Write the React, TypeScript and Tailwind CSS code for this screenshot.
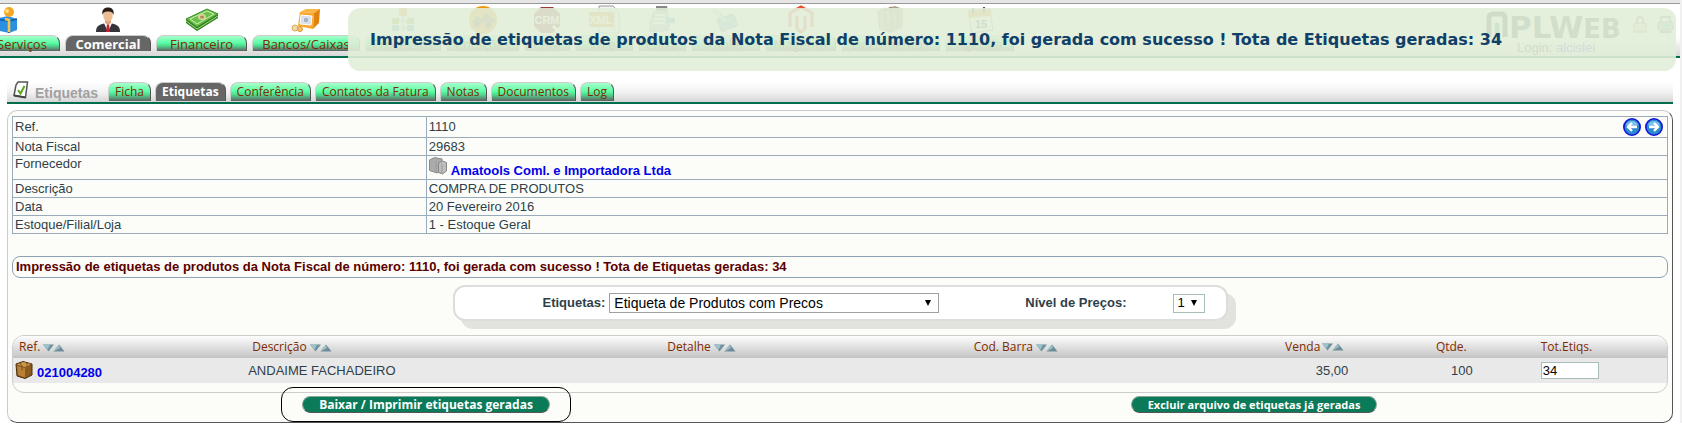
import type { ReactNode } from 'react';

type Tab = { label: string; width: string; icon: ReactNode; active?: boolean };

const tabBase =
  'flex items-center justify-center whitespace-nowrap rounded-t-lg border-t border-l border-r border-[#cccccc] border-r-[#555555] leading-4';
const tabGreen =
  'bg-[linear-gradient(#a8ffcb_0%,#5cffa6_45%,#4fd98f_65%,#606060_100%)] text-[#802a00]';
const tabGrey = 'bg-[#666666] font-bold text-white';

const GiftIcon = () => (
  <svg width="34" height="26" viewBox="0 0 34 26" className="mr-5" aria-hidden="true">
    <path d="M0 12l13-3 9 3v11l-8 3-14-3z" fill="#2d8fe0" />
    <path d="M14 14v12M22 12l-8 2-14-2" stroke="#105ba6" strokeWidth="1.5" fill="none" />
    <path d="M10 12l4 1v12" stroke="#f5c64b" strokeWidth="2.5" fill="none" />
    <circle cx="14" cy="5" r="5" fill="#f5a623" />
    <circle cx="12" cy="4" r="2" fill="#ffe08a" />
  </svg>
);

const PersonIcon = () => (
  <svg width="26" height="26" viewBox="0 0 26 26" aria-hidden="true">
    <path d="M1 25c0-6 3-7 8-8.500h8c5 1.500 8 2.500 8 8.500z" fill="#33353b" />
    <path d="M9 16l4 9 4-9z" fill="#fff" />
    <path d="M12 17h2l1 8h-4z" fill="#c8202c" />
    <path d="M10 12h6v4l-3 2-3-2z" fill="#dba479" />
    <ellipse cx="13" cy="8.500" rx="4.800" ry="6" fill="#edbd94" />
    <path d="M7.500 8C6.500 3 9 .5 13 .5S19.500 3 18.500 8C17.500 5 16 4.500 13 4.500S8.500 5 7.500 8z" fill="#2a1c17" />
  </svg>
);

const MoneyIcon = () => (
  <svg width="34" height="24" viewBox="0 0 34 24" aria-hidden="true">
    <path d="M1 11v4l11 8 21-13V5z" fill="#2e7d1f" />
    <path d="M1 11L22 1l11 5-21 13z" fill="#6cc04a" stroke="#3f8f2a" />
    <path d="M1 13l11 8L33 8" stroke="#a5e082" fill="none" />
    <path d="M5 11L22 3l7 3-17 10z" fill="none" stroke="#c9efb2" />
    <ellipse cx="17" cy="9" rx="4" ry="3" fill="#d9d59a" />
    <ellipse cx="17" cy="9" rx="2" ry="1.500" fill="#a88a5a" />
  </svg>
);

const SafeIcon = () => (
  <svg width="30" height="24" viewBox="0 0 30 24" aria-hidden="true">
    <path d="M9 4L15 1h14l-6 4z" fill="#fbb540" />
    <path d="M23 5l6-4-1 14-6 6z" fill="#e0820e" />
    <path d="M9 4l14 1-1 16L7 18z" fill="#f9a72b" />
    <path d="M10 7l11 1-1 9-11-1z" fill="#d5dfea" stroke="#fff" />
    <circle cx="15" cy="12" r="3" fill="#a8b7c6" stroke="#e9eef3" />
    <circle cx="4" cy="20" r="3" fill="#f2d9a8" stroke="#d9a75a" />
    <circle cx="9" cy="21" r="2.500" fill="#f6c36c" stroke="#d9953a" />
  </svg>
);

const TreeIcon = () => (
  <svg width="24" height="26" viewBox="0 0 24 26" aria-hidden="true">
    <path d="M12 6v18M4 14h16M4 21h16" stroke="#99a5b0" strokeWidth="1" />
    <rect x="8" y="1" width="8" height="8" rx="2" fill="#f09a1a" />
    <rect x="1" y="11" width="7" height="6" rx="1" fill="#8bbf2e" />
    <rect x="16" y="11" width="7" height="6" rx="1" fill="#8bbf2e" />
    <rect x="1" y="18" width="7" height="6" rx="1" fill="#50a8dd" />
    <rect x="16" y="18" width="7" height="6" rx="1" fill="#50a8dd" />
  </svg>
);

const TruckIcon = () => (
  <svg width="30" height="30" viewBox="0 0 30 30" aria-hidden="true">
    <circle cx="15" cy="15" r="14" fill="#f0930f" />
    <path d="M4 17l4-6 6 2 4-5 6 5 3 1v4l-5 1-4-2-6 3z" fill="#8a6a48" />
    <circle cx="9" cy="19" r="3" fill="#6b5743" />
    <circle cx="20" cy="20" r="3" fill="#6b5743" />
  </svg>
);

const CrmIcon = () => (
  <svg width="28" height="28" viewBox="0 0 28 28" aria-hidden="true">
    <path d="M8 1h12l7 7v12l-7 7H8l-7-7V8z" fill="#9c3a3a" />
    <text x="14" y="18" textAnchor="middle" fontSize="11" fontWeight="700" fill="#fff" className="font-['Liberation_Sans',sans-serif]">CRM</text>
    <path d="M20 20l6 6" stroke="#fff" strokeWidth="3" />
  </svg>
);

const XmlIcon = () => (
  <svg width="32" height="30" viewBox="0 0 32 30" aria-hidden="true">
    <path d="M11 1h14l6 6v21H11z" fill="#f3f3f3" stroke="#999" />
    <rect x="1" y="7" width="25" height="15" fill="#ef8a18" />
    <text x="13" y="19" textAnchor="middle" fontSize="11" fontWeight="700" fill="#fff" className="font-['Liberation_Sans',sans-serif]">XML</text>
  </svg>
);

const RegisterIcon = () => (
  <svg width="28" height="30" viewBox="0 0 28 30" aria-hidden="true">
    <path d="M8 1h11l1 5H8z" fill="#888" />
    <path d="M6 7h13l3 10-2 8-18 2V18z" fill="#c2ced8" stroke="#8f9ca8" />
    <path d="M7 10h10M6 14h11M5 18h12" stroke="#fff" strokeWidth="2" />
    <path d="M18 13h9v5h-9z" fill="#5a9fd0" />
  </svg>
);

const PadIcon = () => (
  <svg width="30" height="26" viewBox="0 0 30 26" aria-hidden="true">
    <path d="M6 13l16-6 5 11-16 7z" fill="#88bce8" stroke="#5b93c6" />
    <path d="M2 4l11 11 4 1-2-4L4 2z" fill="#e6f0fa" stroke="#6f9fc8" />
  </svg>
);

const MagentoIcon = () => (
  <svg width="28" height="30" viewBox="0 0 28 30" aria-hidden="true">
    <path d="M3 22V8l11-6 11 6v14M10 24V11M18 24V11M10 24l4 3 4-3" fill="none" stroke="#e5532a" strokeWidth="3" />
  </svg>
);

const FoldersIcon = () => (
  <svg width="30" height="30" viewBox="0 0 30 30" aria-hidden="true">
    <path d="M7 4l12-3 8 3v18l-12 6-12-5z" fill="#b0a48f" />
    <path d="M2 7l7-4v18l5 6-10-3zM9 6l6-4v20l2 5M15 7l6-4v20M21 8l6-4" fill="#c2b7a3" stroke="#8e8069" />
  </svg>
);

const CalendarIcon = () => (
  <svg width="28" height="28" viewBox="0 0 28 28" aria-hidden="true">
    <path d="M2 5l22-2 3 21-21 3z" fill="#fafafa" stroke="#888" />
    <path d="M2 5l22-2 1 7-22 2z" fill="#eea51e" />
    <path d="M7 2v6M18 1v6" stroke="#555" strokeWidth="2" />
    <text x="15" y="22" textAnchor="middle" fontSize="11" fontWeight="700" fill="#444" className="font-['Liberation_Sans',sans-serif]">15</text>
  </svg>
);

const mainTabs: Tab[] = [
  { label: 'Serviços', width: 'w-[76px]', icon: <GiftIcon /> },
  { label: 'Comercial', width: 'w-[86px]', icon: <PersonIcon />, active: true },
  { label: 'Financeiro', width: 'w-[91px]', icon: <MoneyIcon /> },
  { label: 'Bancos/Caixas', width: 'w-[108px]', icon: <SafeIcon /> },
  { label: 'Processos', width: 'w-[76px]', icon: <TreeIcon /> },
  { label: 'Cotações', width: 'w-[73px]', icon: <TruckIcon /> },
  { label: 'CRM', width: 'w-[46px]', icon: <CrmIcon /> },
  { label: 'NFe', width: 'w-[58px]', icon: <XmlIcon /> },
  { label: 'Caixa', width: 'w-[48px]', icon: <RegisterIcon /> },
  { label: 'Tablet', width: 'w-[69px]', icon: <PadIcon /> },
  { label: 'Magento', width: 'w-[71px]', icon: <MagentoIcon /> },
  { label: 'Documentos', width: 'w-[99px]', icon: <FoldersIcon /> },
  { label: 'Agenda', width: 'w-[69px]', icon: <CalendarIcon /> },
];

const subTabs = [
  { label: 'Ficha' },
  { label: 'Etiquetas', active: true },
  { label: 'Conferência' },
  { label: 'Contatos da Fatura' },
  { label: 'Notas' },
  { label: 'Documentos' },
  { label: 'Log' },
];

const ArrowIcon = ({ left }: { left?: boolean }) => (
  <svg width="18" height="18" viewBox="0 0 18 18" aria-hidden="true">
    <circle cx="9" cy="9" r="8.200" fill="#2b8ad0" stroke="#1212d8" strokeWidth="1.600" />
    <path d="M3 7a6.500 6.500 0 0112 0c-3 2-9 2-12 0z" fill="#7fc0ec" />
    <path
      d={left ? 'M14 9H5M9 5L5 9l4 4' : 'M4 9h9M9 5l4 4-4 4'}
      fill="none"
      stroke="#fff"
      strokeWidth="2.400"
    />
  </svg>
);

const SortIcons = () => (
  <svg width="22" height="8" viewBox="0 0 22 8" className="inline-block shrink-0" aria-hidden="true">
    <path d="M0 .5h11L5.500 7.500z" fill="#6f919c" />
    <path d="M0 .5h7L4.500 5.500z" fill="#9fc3cd" />
    <path d="M10.500 7.500h11l-5.500-7z" fill="#6d8c97" />
    <path d="M10.500 7.500L16 .5l1 3.500z" fill="#9bbfca" />
  </svg>
);

const BoxIcon = () => (
  <svg width="18" height="18" viewBox="0 0 18 18" aria-hidden="true">
    <path d="M1 3l7-2.500 9 2.500v11l-7 3.500L2 15z" fill="#8a5a1f" stroke="#4a2e0c" />
    <path d="M2 5l8 2v9.500L3 14z" fill="#b87f35" />
    <path d="M1.500 3.500L8 1l8 2-6 3z" fill="#c9964c" />
    <path d="M5 2l2 3v4M12 1.500V5" stroke="#5f3c12" fill="none" strokeDasharray="2 1" />
  </svg>
);

const SupplierIcon = () => (
  <svg width="18" height="18" viewBox="0 0 18 18" aria-hidden="true">
    <path d="M.5 3l5-2.500L13 2v12l-5 2-7.500-2.500z" fill="#ababab" stroke="#8a8a8a" />
    <path d="M7 4.500V15" stroke="#999" fill="none" />
    <path d="M9.500 6l4-2 4 1.500V14l-4 3-4-1.500z" fill="#bdbdbd" stroke="#888" />
    <path d="M13 7.500v9" stroke="#999" fill="none" />
  </svg>
);

const CheckPageIcon = () => (
  <svg width="16" height="18" viewBox="0 0 16 18" aria-hidden="true">
    <path d="M5 1h9.500L12.500 16.500 1 14.500 3 4z" fill="#fff" stroke="#555" strokeWidth="1.500" />
    <path d="M1 14.500l11.500 2" stroke="#444" strokeWidth="2" />
    <path d="M5 9l2.500 3.500L11.500 5" fill="none" stroke="#5ca51c" strokeWidth="2" />
  </svg>
);

const Logo = () => (
  <svg width="142" height="36" viewBox="0 0 142 36" role="img" aria-label="MPLWeb">
    <path d="M4 27V8q0-4 4-4h8q4 0 4 4v19" fill="none" stroke="#334433" strokeWidth="5" />
    <path d="M12 15v17" stroke="#1d9a66" strokeWidth="5" strokeLinecap="round" />
    <g className="font-['DejaVu_Sans',sans-serif]" fontWeight="700" fill="#445544">
      <text x="24" y="28" fontSize="31">
        PLW<tspan fontSize="26">EB</tspan>
      </text>
    </g>
  </svg>
);

const LockIcon = () => (
  <svg width="14" height="17" viewBox="0 0 14 17" aria-hidden="true">
    <path d="M4 7V4q0-3 3-3t3 3v3" fill="none" stroke="#666" strokeWidth="1.500" />
    <rect x="1" y="7" width="12" height="9" rx="1" fill="#f2e2b0" stroke="#777" />
  </svg>
);

const PrinterIcon = () => (
  <svg width="17" height="17" viewBox="0 0 17 17" aria-hidden="true">
    <path d="M4 7V1h9v6" fill="#fff" stroke="#666" strokeWidth="1.500" />
    <rect x="1" y="6" width="15" height="8" rx="2" fill="#bbb" stroke="#666" />
    <rect x="4" y="8" width="9" height="5" fill="#79bfe0" />
    <path d="M3 16h11" stroke="#666" strokeWidth="2" />
  </svg>
);

const Caret = () => (
  <svg width="6" height="6" viewBox="0 0 6 6" className="pointer-events-none absolute top-1/2 right-2 -translate-y-1/2" aria-hidden="true">
    <path d="M0 0h6L3 6z" fill="#000" />
  </svg>
);

const message =
  'Impressão de etiquetas de produtos da Nota Fiscal de número: 1110, foi gerada com sucesso ! Tota de Etiquetas geradas: 34';

const details: { label: string; value: ReactNode; height: string }[] = [
  {
    label: 'Ref.',
    height: 'h-[21px]',
    value: (
      <div className="flex items-center justify-between">
        <span>1110</span>
        <span className="flex gap-1 pr-0.5">
          <a href="#anterior" aria-label="Anterior"><ArrowIcon left /></a>
          <a href="#proximo" aria-label="Próximo"><ArrowIcon /></a>
        </span>
      </div>
    ),
  },
  { label: 'Nota Fiscal', height: 'h-[18px]', value: '29683' },
  {
    label: 'Fornecedor',
    height: 'h-6',
    value: (
      <a href="#fornecedor" className="flex items-start gap-1 font-bold text-[#0000ee]">
        <SupplierIcon />
        <span className="pt-1.5">Amatools Coml. e Importadora Ltda</span>
      </a>
    ),
  },
  { label: 'Descrição', height: 'h-[18px]', value: 'COMPRA DE PRODUTOS' },
  { label: 'Data', height: 'h-[18px]', value: '20 Fevereiro 2016' },
  { label: 'Estoque/Filial/Loja', height: 'h-[18px]', value: '1 - Estoque Geral' },
];

const treb = "font-['Open_Sans','Noto_Sans',sans-serif]";
const pill =
  'block h-[17px] whitespace-nowrap rounded-full border border-[#8aa79b] border-b-[#555555] bg-[#0a7a58] leading-[14px] font-bold text-white';

export default function App() {
  return (
    <div className="relative overflow-x-hidden border-r-2 border-[#f0f0f0] bg-white font-['Liberation_Sans',Arial,sans-serif] text-[13px] leading-4 text-[#2f3f49]">
      <div className="h-1 border-b border-[#999999] bg-[#e6e6e6]" />

      <header className="flex h-[54px] items-start justify-between overflow-hidden border-b-2 border-[#006d4f] bg-[linear-gradient(#fff_65%,#d8d8d8_100%)]">
        <nav className={`-ml-4 flex items-end gap-[5px] pt-px text-[13px] ${treb}`}>
          {mainTabs.map((t) => (
            <a key={t.label} href={`#${t.label}`} className={`flex shrink-0 flex-col items-center ${t.width}`}>
              <span className="flex h-[30px] items-center justify-center">{t.icon}</span>
              <span className={`h-4 w-full ${tabBase} ${t.active ? tabGrey : tabGreen}`}>{t.label}</span>
            </a>
          ))}
        </nav>
        <div className="flex items-start gap-1.5 pt-1.5 pr-1.5">
          <div>
            <Logo />
            <p className="-mt-1 pl-8 text-[13px] leading-3">
              Login: <b className="font-normal text-[#3333ee]">alcislei</b>
            </p>
          </div>
          <div className="flex gap-2.5 pt-1.5">
            <LockIcon />
            <PrinterIcon />
          </div>
        </div>
      </header>

      <main className="px-[7px] pt-6">
        <div className="flex h-[22px] items-end gap-2 border-b-2 border-[#006d4f] bg-[linear-gradient(#fff_0%,#f2f2f2_50%,#d6d6d6_100%)] pb-px">
          <h1 className="flex items-start gap-1.5 pl-[6px] text-[14px] font-bold text-[#a0a0a0]">
            <CheckPageIcon />
            <span className="pt-1">Etiquetas</span>
          </h1>
          <nav className={`flex items-end gap-1 pl-0.5 text-[12px] ${treb}`}>
            {subTabs.map((t) => (
              <a key={t.label} href={`#${t.label}`} className={`h-[19px] px-1.5 ${tabBase} ${t.active ? tabGrey : tabGreen}`}>
                {t.label}
              </a>
            ))}
          </nav>
        </div>

        <section className="mt-1.5 rounded-[10px] border border-[#cccccc] border-r-[#555555] border-b-[#555555] bg-[#fcfdf8] px-1 pt-[5px]">
          <table className="w-full table-fixed border-collapse">
            <colgroup>
              <col className="w-1/4" />
              <col />
            </colgroup>
            <tbody>
              {details.map((d) => (
                <tr key={d.label} className={d.height}>
                  <th scope="row" className={`border border-[#9aabbb] px-0.5 py-0 text-left font-normal ${d.label === 'Fornecedor' ? 'align-top' : ''}`}>
                    {d.label}
                  </th>
                  <td className="border border-[#9aabbb] px-0.5 py-0">{d.value}</td>
                </tr>
              ))}
            </tbody>
          </table>

          <p className="mt-[22px] rounded-lg border border-[#8ea2b4] px-[3px] py-[2px] font-bold text-[#5a0000]">{message}</p>

          <form className="mx-auto mt-[7px] flex h-9 w-[46.8%] items-center rounded-xl border-2 border-[#dddddd] bg-white pl-[88px] shadow-[8px_8px_0_#e2e3df]">
            <label htmlFor="modelo" className="font-bold">Etiquetas:</label>
            <span className="relative ml-1 w-[330px]">
              <select id="modelo" className="block h-5 w-full appearance-none border border-[#a0a0a0] bg-white pl-1 text-[14px] leading-4 text-black">
                <option>Etiqueta de Produtos com Precos</option>
              </select>
              <Caret />
            </span>
            <label htmlFor="nivel" className="ml-[86px] font-bold">Nível de Preços:</label>
            <span className="relative ml-[46px] w-8">
              <select id="nivel" className="block h-[19px] w-full appearance-none border border-[#a9bdb9] bg-white pl-1 text-[13px] leading-4 text-black">
                <option>1</option>
              </select>
              <Caret />
            </span>
          </form>

          <div className="mt-[14px] overflow-hidden rounded-xl border border-[#cccccc] pb-[9px]">
            <table className="w-full table-fixed border-collapse">
              <colgroup>
                <col className="w-[14.1%]" />
                <col className="w-[25.1%]" />
                <col className="w-[18.4%]" />
                <col className="w-[18.5%]" />
                <col className="w-[5%]" />
                <col className="w-[7.4%]" />
                <col />
              </colgroup>
              <thead>
                <tr className={`h-[22px] bg-[linear-gradient(#fdfdfd,#c4c4c4)] text-[12px] text-[#802a00] ${treb}`}>
                  <th className="px-1.5 py-0 text-left font-medium">Ref. <SortIcons /></th>
                  <th className="px-1.5 py-0 text-left font-medium">Descrição <SortIcons /></th>
                  <th className="px-1.5 py-0 text-left font-medium">Detalhe <SortIcons /></th>
                  <th className="px-2 py-0 text-left font-medium">Cod. Barra <SortIcons /></th>
                  <th className="px-2.5 py-0 font-medium">
                    <span className="flex items-center justify-end gap-0.5">Venda<SortIcons /></span>
                  </th>
                  <th className="px-2.5 py-0 text-right font-medium">Qtde.</th>
                  <th className="py-0 pl-16 text-left font-medium">Tot.Etiqs.</th>
                </tr>
              </thead>
              <tbody>
                <tr className="h-[25px] bg-[#e9e9e9]">
                  <td className="px-0.5 py-0">
                    <a href="#021004280" className="flex items-start gap-1 font-bold text-[#0000ee]">
                      <BoxIcon />
                      <span className="pt-1">021004280</span>
                    </a>
                  </td>
                  <td className="px-0.5 py-0">ANDAIME FACHADEIRO</td>
                  <td />
                  <td />
                  <td className="px-1.5 py-0 text-right">35,00</td>
                  <td className="px-1 py-0 text-right">100</td>
                  <td className="py-0 pl-16">
                    <input aria-label="Tot.Etiqs." defaultValue="34" className="block h-[17px] w-[58px] border border-[#a9bdb9] bg-white px-px text-[13px] text-black" />
                  </td>
                </tr>
              </tbody>
            </table>
          </div>

          <div className={`-mt-[6px] grid grid-cols-2 items-center text-[12px] ${treb}`}>
            <div className="flex justify-center">
              <div className="rounded-xl border border-black px-5 py-2">
                <button type="button" className={`px-4 text-[12px] ${pill}`}>
                  Baixar / Imprimir etiquetas geradas
                </button>
              </div>
            </div>
            <div className="flex justify-center">
              <button type="button" className={`px-4 text-[11px] ${pill}`}>
                Excluir arquivo de etiquetas já geradas
              </button>
            </div>
          </div>
        </section>
      </main>

      <div
        role="status"
        className="absolute top-2 right-1 left-[348px] flex h-[63px] items-center rounded-xl bg-[rgba(225,237,216,0.9)] px-[22px] font-['DejaVu_Sans',Verdana,sans-serif] text-[16px] font-bold whitespace-nowrap text-[#104068]"
      >
        {message}
      </div>
    </div>
  );
}
